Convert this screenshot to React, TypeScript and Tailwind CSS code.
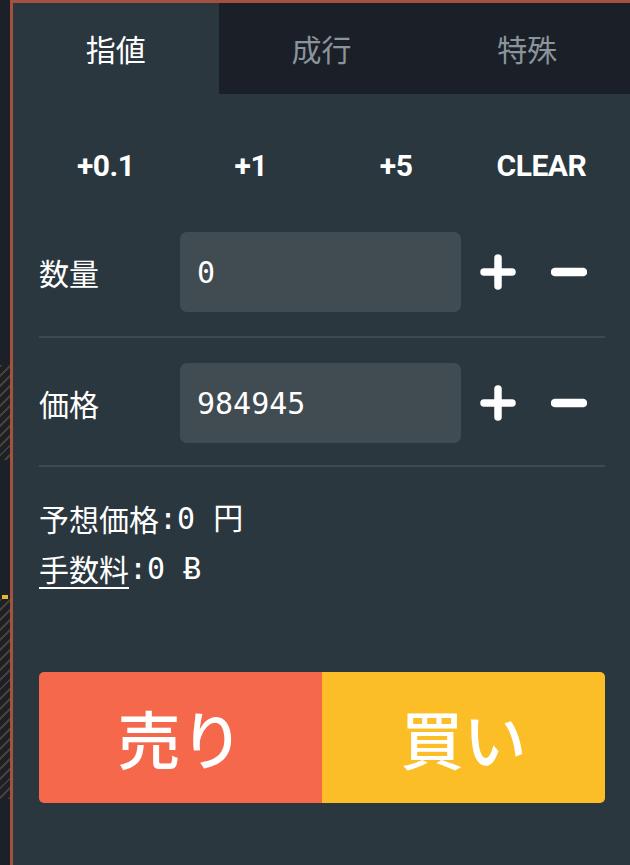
import React from 'react'

const jp = "font-['Noto_Sans_CJK_JP','Noto_Sans',sans-serif]"
const mono = "font-['DejaVu_Sans_Mono','Noto_Sans_CJK_JP',monospace]"

function PlusIcon() {
  return (
    <svg width="36" height="36" viewBox="0 0 36 36" className="shrink-0">
      <path d="M18 4v28M4 18h28" stroke="#fff" strokeWidth="7.5" strokeLinecap="round" />
    </svg>
  )
}

function MinusIcon() {
  return (
    <svg width="36" height="36" viewBox="0 0 36 36" className="shrink-0">
      <path d="M4 18h28" stroke="#fff" strokeWidth="8.5" strokeLinecap="round" />
    </svg>
  )
}

function InputRow({ label, value }: { label: string; value: string }) {
  return (
    <div className="flex items-center h-[80px]">
      <div className={`w-[141px] shrink-0 text-[30px] text-white ${jp}`}>{label}</div>
      <div
        className={`w-[281px] h-full shrink-0 rounded-[7px] bg-[#414b52] pl-[17px] flex items-center text-[30px] text-white ${mono}`}
      >
        {value}
      </div>
      <div className="ml-[19px]">
        <PlusIcon />
      </div>
      <div className="ml-[35px]">
        <MinusIcon />
      </div>
    </div>
  )
}

export default function App() {
  const tabs = ['指値', '成行', '特殊']
  const quick = ['+0.1', '+1', '+5', 'CLEAR']

  return (
    <div className="flex w-[630px] h-[865px] bg-[#1b2029] overflow-hidden">
      {/* chart edge behind the panel */}
      <div className="w-[10px] shrink-0 flex flex-col">
        <div className="h-[365px]" />
        <div className="h-[95px] bg-[repeating-linear-gradient(135deg,#4a4030_0_2px,transparent_2px_7px)]" />
        <div className="h-[135px]" />
        <div className="h-[4px] mx-[2px] bg-[#e8b52a]" />
        <div className="h-[200px] bg-[repeating-linear-gradient(135deg,#4a4030_0_2px,transparent_2px_7px)]" />
      </div>

      <div className="flex-1 flex flex-col bg-[#2b373f] border-l-[3px] border-t-[3px] border-[#a5513f]">
        {/* Tabs */}
        <div className="flex h-[91px] shrink-0">
          {tabs.map((t, i) => (
            <div
              key={t}
              className={`flex-1 flex items-center justify-center text-[30px] ${jp} ${
                i === 0 ? 'bg-[#2b373f] text-white' : 'bg-[#1b1f27] text-[#8a949b]'
              }`}
            >
              {t}
            </div>
          ))}
        </div>

        <div className="pl-[26px] pr-[25px]">
          {/* Quick amount buttons */}
          <div className="grid grid-cols-4 h-[70px] mt-[36px] -ml-[6px] -mr-[9px]">
            {quick.map((q) => (
              <div
                key={q}
                className="flex items-center justify-center text-[30px] font-bold tracking-[-0.5px] text-white font-['Roboto','Liberation_Sans',sans-serif]"
              >
                {q}
              </div>
            ))}
          </div>

          <div className="mt-[32px] pb-[24px] border-b-2 border-[#3e4a52]">
            <InputRow label="数量" value="0" />
          </div>
          <div className="pt-[25px] pb-[22px] border-b-2 border-[#3e4a52]">
            <InputRow label="価格" value="984945" />
          </div>

          {/* Estimates */}
          <div className="pt-[26px] text-white text-[30px]">
            <div className="h-[50px] flex items-center">
              <span className={jp}>予想価格</span>
              <span className={mono}>:0 円</span>
            </div>
            <div className="h-[50px] flex items-center">
              <span className={`${jp} underline underline-offset-[6px] decoration-2`}>手数料</span>
              <span className={mono}>:0 Ƀ</span>
            </div>
          </div>

          {/* Sell / Buy */}
          <div className="mt-[79px] flex h-[131px] rounded-[5px] overflow-hidden">
            <button
              className={`flex-1 bg-[#f6684b] text-white text-[63px] font-medium flex items-center justify-center ${jp}`}
            >
              売り
            </button>
            <button
              className={`flex-1 bg-[#fbbe27] text-white text-[63px] font-medium flex items-center justify-center ${jp}`}
            >
              買い
            </button>
          </div>
        </div>
      </div>
    </div>
  )
}
